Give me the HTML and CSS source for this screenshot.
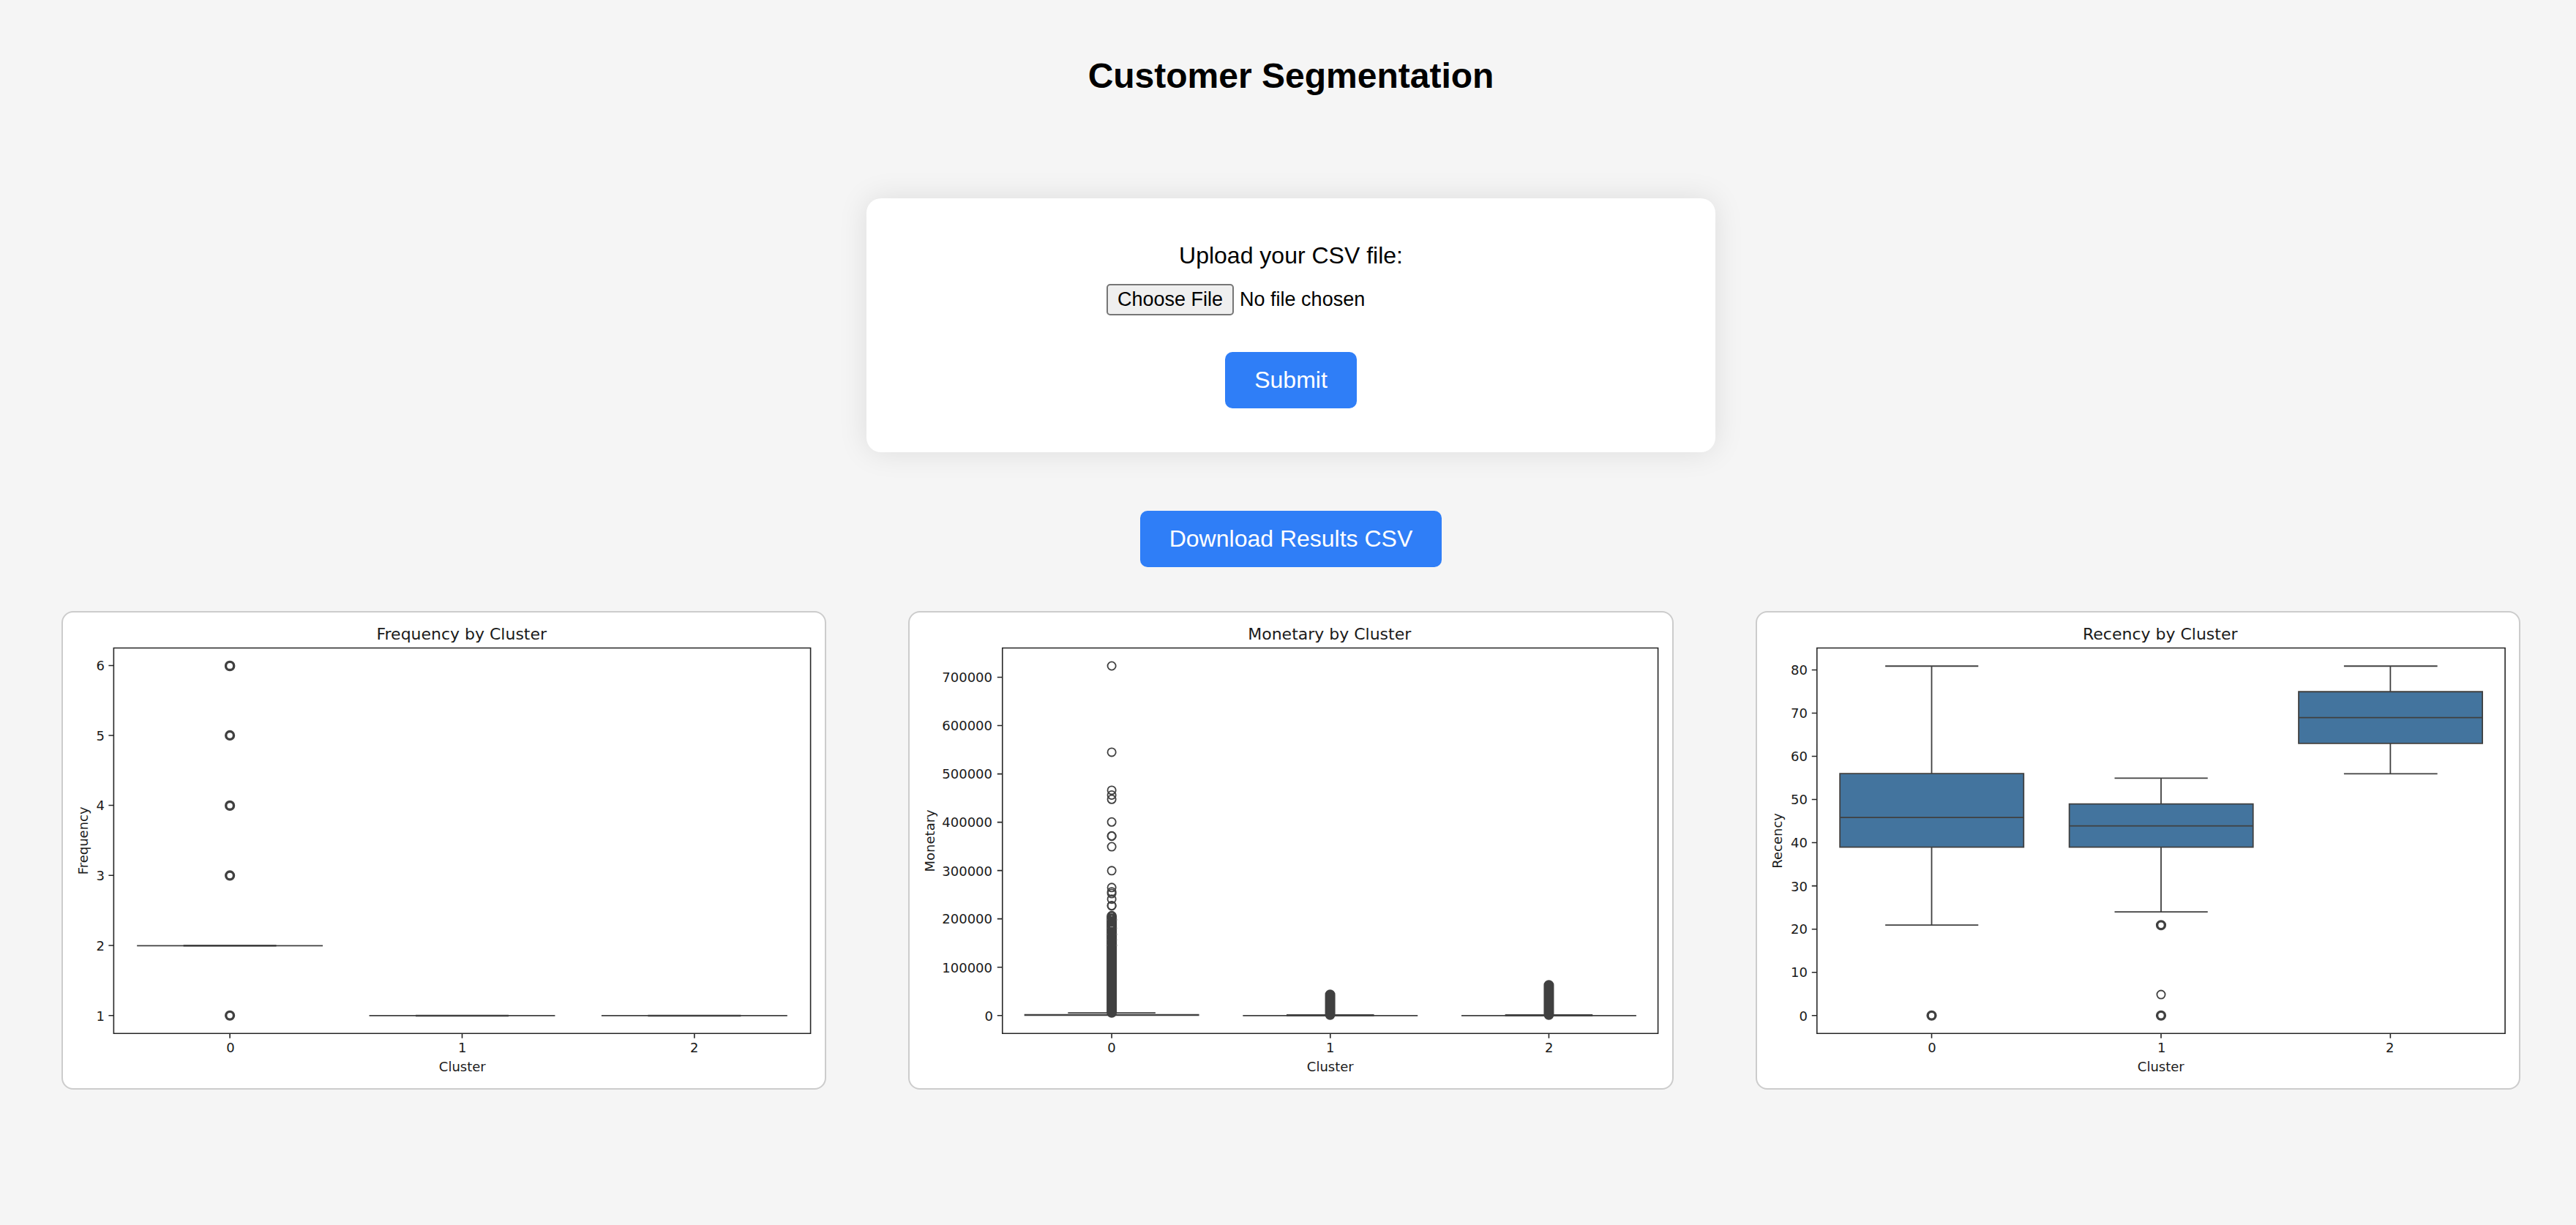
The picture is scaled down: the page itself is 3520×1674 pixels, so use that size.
FILE: index.html
```html
<!DOCTYPE html>
<html lang="en">
<head>
<meta charset="utf-8">
<meta name="viewport" content="width=device-width, initial-scale=1">
<title>Customer Segmentation</title>
<link rel="stylesheet" href="styles.css">
</head>
<body>
<main class="page">
  <h1 class="title">Customer Segmentation</h1>

  <form class="upload">
    <label class="upload-label" for="csv">Upload your CSV file:</label>
    <input class="upload-file" type="file" id="csv" name="file" accept=".csv">
    <button class="button" type="submit">Submit</button>
  </form>

  <a class="button" href="#results">Download Results CSV</a>

  <section class="plots" id="results">
    <svg class="plot" viewBox="0 0 1042 650" role="img" aria-label="Frequency by Cluster">
      <text class="plot-title" x="545" y="37">Frequency by Cluster</text>
      <path class="axis" d="M69.4 48.5H1022V575.5H69.4ZM69.4 72.5h-7M69.4 168h-7M69.4 263.6h-7M69.4 359.4h-7M69.4 455.2h-7M69.4 551h-7M228.2 575v7M545.7 575v7M863.2 575v7"/>
      <g class="tick-y">
        <text x="57" y="79">6</text><text x="57" y="175">5</text><text x="57" y="270">4</text>
        <text x="57" y="366">3</text><text x="57" y="462">2</text><text x="57" y="558">1</text>
      </g>
      <g class="tick-x">
        <text x="229" y="601">0</text><text x="546" y="601">1</text><text x="863" y="601">2</text>
        <text x="546" y="627">Cluster</text>
        <text x="-312" y="34" transform="rotate(-90)">Frequency</text>
      </g>
      <path class="line" d="M101.2 455.5H355.2M418.7 551.2H672.7M736.2 551.2H990.2"/>
      <path class="line line-thick" d="M164.7 455.5H291.7M482.2 551.2H609.2M799.7 551.2H926.7"/>
      <g class="dot dot-thick">
        <circle cx="228.2" cy="73" r="5.6"/><circle cx="228.2" cy="168" r="5.4"/>
        <circle cx="228.2" cy="264" r="5.4"/><circle cx="228.2" cy="359.6" r="5.4"/>
        <circle cx="228.2" cy="551" r="5.4"/>
      </g>
    </svg>

    <svg class="plot" viewBox="0 0 1042 650" role="img" aria-label="Monetary by Cluster">
      <text class="plot-title" x="574" y="37">Monetary by Cluster</text>
      <path class="axis" d="M126.8 48.5H1023V575.5H126.8ZM126.8 88.5h-7M126.8 154.6h-7M126.8 220.7h-7M126.8 286.7h-7M126.8 352.8h-7M126.8 418.8h-7M126.8 484.9h-7M126.8 551h-7M276.2 575v7M575 575v7M873.8 575v7"/>
      <g class="tick-y">
        <text x="113" y="95">700000</text><text x="113" y="161">600000</text><text x="113" y="227">500000</text>
        <text x="113" y="293">400000</text><text x="113" y="360">300000</text><text x="113" y="425">200000</text>
        <text x="113" y="492">100000</text><text x="114" y="558">0</text>
      </g>
      <g class="tick-x">
        <text x="276" y="601">0</text><text x="575" y="601">1</text><text x="874" y="601">2</text>
        <text x="575" y="627">Cluster</text>
        <text x="-312" y="34" transform="rotate(-90)">Monetary</text>
      </g>
      <path class="line" d="M216.4 547.4H336M455.5 551.2H694.5M754.3 551.2H993.3"/>
      <path class="line line-thick" d="M156.7 550.3H395.7M515.2 550.6H634.8M814 550.6H933.6"/>
      <g class="dot">
        <circle cx="276.2" cy="73" r="5.6"/><circle cx="276.2" cy="191" r="5.6"/>
        <circle cx="276.2" cy="243" r="5.6"/><circle cx="276.2" cy="249.6" r="5.6"/>
        <circle cx="276.2" cy="255.4" r="5.6"/><circle cx="276.2" cy="286.4" r="5.6"/>
        <circle cx="276.2" cy="305.4" r="5.6"/><circle cx="276.2" cy="305.9" r="5.6"/>
        <circle cx="276.2" cy="320.2" r="5.6"/><circle cx="276.2" cy="353" r="5.6"/>
        <circle cx="276.2" cy="376" r="5.6"/><circle cx="276.2" cy="381.8" r="5.6"/>
        <circle cx="276.2" cy="384.2" r="5.6"/><circle cx="276.2" cy="391.8" r="5.6"/>
        <circle cx="276.2" cy="400.6" r="5.6"/><circle cx="276.2" cy="401.1" r="5.6"/>
      </g>
      <path class="stack" d="M276.2 415V547M574.8 522.5V550M873.8 509.5V550"/>
      <path class="gap" d="M274.2 411.2h4M275.2 415h2M274.2 429.8h4M269.2 419v2M283.2 419v2M269.2 431v1M283.2 431v1M269.2 439v2M283.2 439v2M269.2 447v1M283.2 447v1M269.2 454v2M283.2 454v2"/>
    </svg>

    <svg class="plot" viewBox="0 0 1042 650" role="img" aria-label="Recency by Cluster">
      <text class="plot-title" x="551" y="37">Recency by Cluster</text>
      <path class="axis" d="M81.8 48.5H1022.5V575.5H81.8ZM81.8 78.5h-7M81.8 137.5h-7M81.8 196.6h-7M81.8 255.6h-7M81.8 314.7h-7M81.8 373.8h-7M81.8 432.9h-7M81.8 491.9h-7M81.8 551h-7M238.6 575v7M552.2 575v7M865.7 575v7"/>
      <g class="tick-y">
        <text x="69" y="85">80</text><text x="69" y="144">70</text><text x="69" y="203">60</text>
        <text x="69" y="262">50</text><text x="69" y="321">40</text><text x="69" y="381">30</text>
        <text x="69" y="439">20</text><text x="69" y="498">10</text><text x="69" y="558">0</text>
      </g>
      <g class="tick-x">
        <text x="239" y="601">0</text><text x="553" y="601">1</text><text x="865" y="601">2</text>
        <text x="552" y="627">Cluster</text>
        <text x="-312" y="34" transform="rotate(-90)">Recency</text>
      </g>
      <path class="box" d="M113.2 220.3H364.4V320.8H113.2ZM426.8 261.8H678V320.8H426.8ZM740.3 108.3H991.5V179H740.3Z"/>
      <path class="line" d="M113.2 280.2H364.4M426.8 291.8H678M740.3 143.7H991.5"/>
      <path class="line" d="M238.6 73.3V220.3M238.6 320.8V427.3M175.2 73.3H302.4M175.2 427.3H302.4M552.2 226.5V261.8M552.2 320.8V409.2M488.7 226.5H616M488.7 409.2H616M865.7 73.3V108.3M865.7 179V220.4M802.2 73.3H930M802.2 220.4H930"/>
      <g class="dot dot-thick">
        <circle cx="238.6" cy="551" r="5.4"/><circle cx="552.2" cy="427.4" r="5.4"/>
        <circle cx="552.2" cy="551" r="5.4"/>
      </g>
      <circle class="dot" cx="552.2" cy="522.3" r="5.6"/>
    </svg>
  </section>
</main>
</body>
</html>
```

FILE: styles.css
```css
* {
  box-sizing: border-box;
}

body {
  margin: 0;
  background: #f5f5f5;
  color: #000;
  font-family: "Liberation Sans", Arial, sans-serif;
}

.page {
  display: flex;
  flex-direction: column;
  align-items: center;
  padding: 76px 20px 60px 28px;
}

.title {
  margin: 0 0 140px;
  font-size: 48px;
  line-height: 55px;
  font-weight: bold;
}

.upload {
  display: flex;
  flex-direction: column;
  align-items: center;
  width: 100%;
  max-width: 1160px;
  margin-bottom: 80px;
  padding: 60px;
  border-radius: 20px;
  background: #fff;
  box-shadow: 0 0 40px rgba(0, 0, 0, 0.1);
}

.upload-label {
  margin-bottom: 20px;
  font-size: 32px;
  line-height: 37px;
}

.upload-file {
  width: 504px;
  max-width: 100%;
  margin-bottom: 50px;
  color: #000;
  font-family: inherit;
  font-size: 27px;
  line-height: 31px;
}

.upload-file::file-selector-button {
  height: 43px;
  margin: 0 8px 0 0;
  padding: 2px 13px;
  border: 2px solid #767676;
  border-radius: 5px;
  background: #efefef;
  color: #000;
  font: inherit;
}

.button {
  padding: 20px 40px;
  border: 0;
  border-radius: 10px;
  background: #2f7ef7;
  color: #fff;
  font-family: inherit;
  font-size: 32px;
  line-height: 37px;
  text-decoration: none;
  cursor: pointer;
}

.plots {
  display: flex;
  justify-content: space-around;
  width: 100%;
  margin-top: 60px;
}

.plot {
  box-sizing: content-box;
  display: block;
  width: 30%;
  border: 2px solid #ccc;
  border-radius: 16px;
  background: #fff;
  font-family: "DejaVu Sans", sans-serif;
  font-size: 18px;
  fill: #1a1a1a;
}

.plot-title {
  font-size: 22px;
  text-anchor: middle;
}

.tick-x {
  text-anchor: middle;
}

.tick-y {
  text-anchor: end;
}

.axis {
  fill: none;
  stroke: #262626;
  stroke-width: 1.6;
}

.line {
  fill: none;
  stroke: #404040;
  stroke-width: 1.8;
}

.line-thick {
  stroke-width: 2.6;
}

.box {
  fill: #43749e;
  stroke: #404040;
  stroke-width: 1.8;
}

.dot {
  fill: none;
  stroke: #404040;
  stroke-width: 1.8;
}

.dot-thick {
  stroke-width: 3.4;
}

.stack {
  fill: none;
  stroke: #404040;
  stroke-width: 14;
  stroke-linecap: round;
}

.gap {
  fill: none;
  stroke: #999;
  stroke-width: 1;
}
```
